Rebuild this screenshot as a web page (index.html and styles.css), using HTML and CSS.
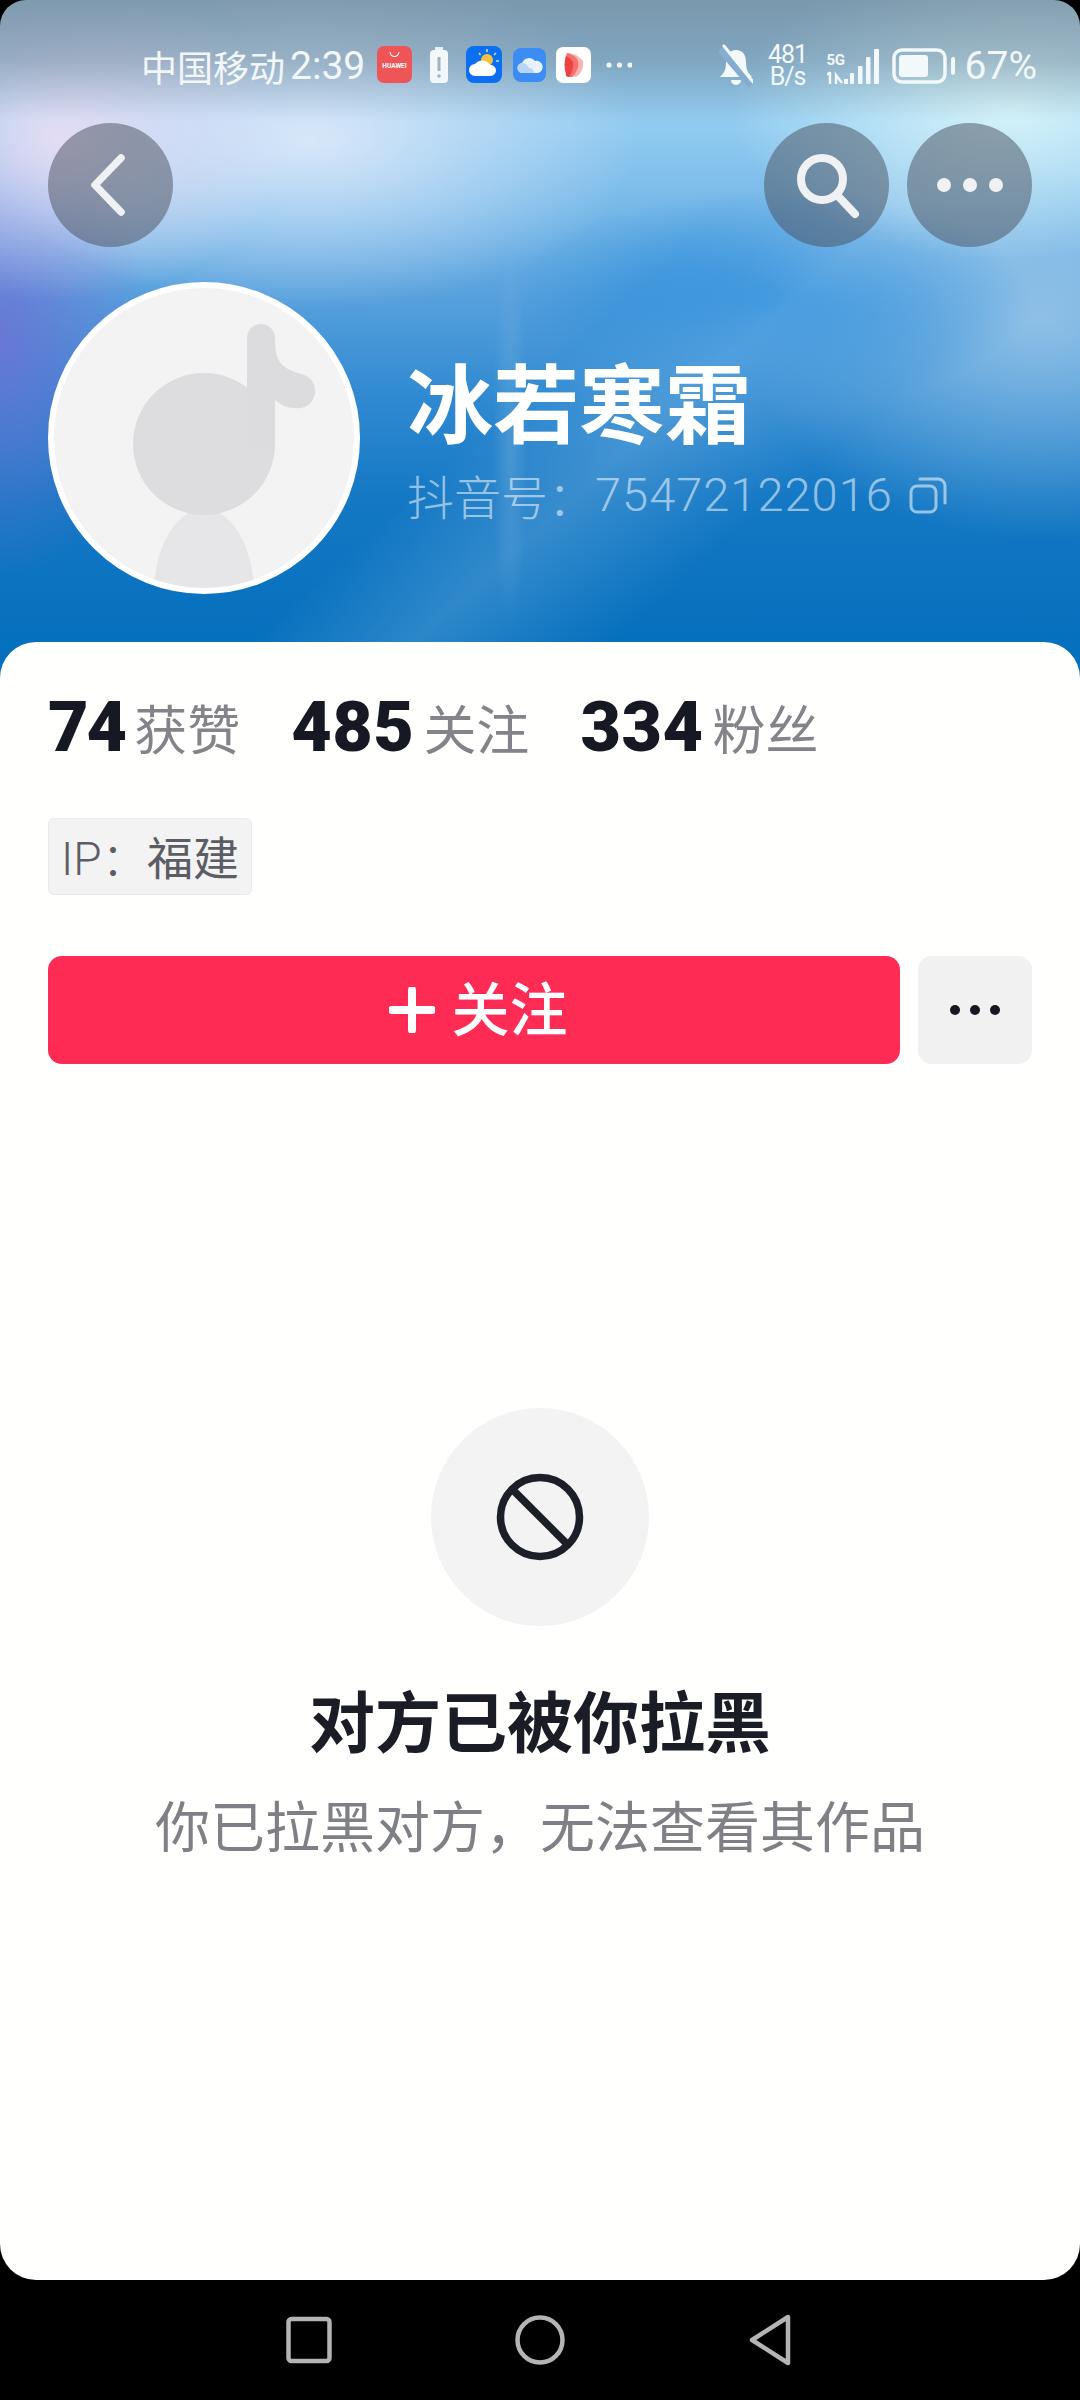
FILE: index.html
```html
<!DOCTYPE html>
<html lang="zh">
<head>
<meta charset="utf-8">
<title>冰若寒霜</title>
<link rel="stylesheet" href="styles.css">
</head>
<body>
<div class="app">
  <header class="hero">
    <div class="status">
      <div class="status-left">
        <span class="carrier">中国移动</span><span class="clock">2:39</span>
        <svg class="notif" width="255" height="44" viewBox="0 0 255 44">
          <rect x="0" y="2" width="35" height="37" rx="7" fill="#ee5557"/>
          <path d="M13 8c1 6 8 6 9 0" fill="none" stroke="#fff" stroke-width="1.2"/>
          <text x="17.5" y="24" class="hw">HUAWEI</text>
          <path d="M58 3h8v3h-8z" fill="#fff" opacity=".8"/>
          <rect x="53" y="6" width="18" height="33" rx="4" fill="#f4f7fa"/>
          <path d="M62 13v14" stroke="#9fb4c2" stroke-width="3"/><circle cx="62" cy="32" r="1.8" fill="#9fb4c2"/>
          <rect x="89" y="2" width="36" height="37" rx="8" fill="#0a6ff0"/>
          <circle cx="110" cy="16" r="6" fill="#f4c23c"/>
          <path d="M110 5v3M119 9l-2 2M122 17h-3M102 9l1.500 2" stroke="#cfe6a8" stroke-width="1.500"/>
          <path d="M98 32a6 6 0 0 1 0-12 9 9 0 0 1 15 1 5.500 5.500 0 0 1 1 11z" fill="#fff"/>
          <rect x="136" y="4" width="33" height="34" rx="8" fill="#3b8df3"/>
          <path d="M146 29a5 5 0 0 1-1-10 7.500 7.500 0 0 1 13-2 6 6 0 0 1 3 12z" fill="#e8f2fd"/>
          <path d="M146 29a5 5 0 0 1-1-10c3 0 6 2 7 5 3 0 5 2 5 5z" fill="#b9d6f7"/>
          <rect x="179" y="3" width="35" height="36" rx="7" fill="#fff"/>
          <path d="M190 9c5 0 11 2 16 8 1 7-2 13-7 16-6-1-9 0-8-4-2-6-3-14-1-20z" fill="#f9b5b2"/>
          <path d="M190 9c4 1 9 3 11 8 1 6-1 11-6 16-3 0-4 0-5-1-2-7-3-16 0-23z" fill="#f7716f"/>
          <path d="M189 12c3 1 5 3 7 6 1 5-1 10-4 15-3-1-4-1-3-3-2-6-2-12 0-18z" fill="#ec4244"/>
          <g fill="#fff" opacity=".9"><circle cx="232" cy="21" r="2.600"/><circle cx="242.500" cy="21" r="2.600"/><circle cx="253" cy="21" r="2.600"/></g>
        </svg>
      </div>
      <div class="status-right">
        <svg class="bell" width="34" height="44" viewBox="0 0 34 44">
          <path d="M17 6c-7 0-10 5-10 12 0 8-2 11-6 15h32c-4-4-6-7-6-15 0-7-3-12-10-12z" fill="#f3f8fb"/>
          <path d="M12 36h10a5 5 0 0 1-10 0z" fill="#f3f8fb"/>
          <path d="M1 5l31 36" stroke="#84add0" stroke-width="7"/>
          <path d="M5 2l29 36" stroke="#f3f8fb" stroke-width="3" stroke-linecap="round"/>
        </svg>
        <div class="net"><span>481</span><span>B/s</span></div>
        <div class="sig">
          <div class="sig-type">
            <span class="g5">5G</span>
            <svg width="21" height="14" viewBox="0 0 21 14"><path d="M3 13V1M0 4l3-3M9 13V4l6 8" fill="none" stroke="#f3f8fb" stroke-width="2.400"/><rect x="17" y="8" width="4" height="5" fill="#f3f8fb"/></svg>
          </div>
          <svg width="29" height="36" viewBox="0 0 29 36"><g fill="#f3f8fb"><rect x="0" y="24" width="4" height="11" rx="1"/><rect x="8" y="17" width="4.500" height="18" rx="1"/><rect x="16" y="8" width="4.500" height="27" rx="1"/><rect x="24" y="0" width="5" height="35" rx="1"/></g></svg>
        </div>
        <svg class="batt" width="63" height="36" viewBox="0 0 63 36">
          <rect x="2" y="2" width="51" height="32" rx="8" fill="none" stroke="#f3f8fb" stroke-width="3.500"/>
          <rect x="7" y="7" width="29" height="22" rx="3" fill="#f3f8fb"/>
          <rect x="59" y="9" width="4" height="18" rx="2" fill="#f3f8fb"/>
        </svg>
        <span class="pct">67%</span>
      </div>
    </div>

    <nav class="top-actions">
      <button class="round">
        <svg class="chev" width="44" height="66" viewBox="0 0 44 66"><path d="M35 6L9 33l26 27" fill="none" stroke="#f0f1f3" stroke-width="7.500" stroke-linecap="round" stroke-linejoin="round"/></svg>
      </button>
      <div class="top-right">
        <button class="round">
          <svg width="68" height="68" viewBox="0 0 68 68"><circle cx="29" cy="28" r="21" fill="none" stroke="#f0f1f3" stroke-width="8"/><path d="M44 44l18 19" stroke="#f0f1f3" stroke-width="8" stroke-linecap="round"/></svg>
        </button>
        <button class="round">
          <svg width="68" height="16" viewBox="0 0 68 16"><g fill="#f0f1f3"><circle cx="8" cy="8" r="7"/><circle cx="34" cy="8" r="7"/><circle cx="60" cy="8" r="7"/></g></svg>
        </button>
      </div>
    </nav>

    <section class="profile">
      <div class="avatar">
        <svg width="300" height="300" viewBox="0 0 300 300">
          <ellipse cx="150" cy="305" rx="50" ry="84" fill="#e6e6e8"/>
          <circle cx="150" cy="156" r="71" fill="#dddddf"/>
          <path d="M193 50a14 14 0 0 1 28 0c0 24 6 30 26 36a17 17 0 0 1-6 34c-8 0-14-3-20-8v46h-28z" fill="#dcdcde"/>
        </svg>
      </div>
      <div class="identity">
        <h1 class="name">冰若寒霜</h1>
        <div class="uid">
          <span class="uid-label">抖音号：</span><span class="uid-num">75472122016</span>
          <svg class="copy" width="38" height="38" viewBox="0 0 38 38"><rect x="2" y="10" width="25" height="26" rx="6" fill="none" stroke="currentColor" stroke-width="3"/><path d="M11 3h18a7 7 0 0 1 7 7v17" fill="none" stroke="currentColor" stroke-width="3" stroke-linecap="round"/></svg>
        </div>
      </div>
    </section>
  </header>

  <main class="card">
    <div class="stats">
      <div class="stat stat-tight"><b>74</b><span>获赞</span></div>
      <div class="stat"><b>485</b><span>关注</span></div>
      <div class="stat"><b>334</b><span>粉丝</span></div>
    </div>
    <div class="tag"><span class="tag-ip">IP：</span><span>福建</span></div>
    <div class="actions">
      <button class="follow">
        <svg width="46" height="46" viewBox="0 0 46 46"><path d="M23 3v40M3 23h40" stroke="#fff" stroke-width="8" stroke-linecap="round"/></svg>
        <span class="follow-label">关注</span>
      </button>
      <button class="more">
        <svg width="52" height="12" viewBox="0 0 52 12"><g fill="#16181f"><circle cx="6" cy="6" r="5"/><circle cx="26" cy="6" r="5"/><circle cx="46" cy="6" r="5"/></g></svg>
      </button>
    </div>
    <section class="blocked">
      <div class="blocked-icon">
        <svg width="88" height="88" viewBox="0 0 88 88"><circle cx="44" cy="44" r="39.500" fill="none" stroke="#1c1e28" stroke-width="7.500"/><path d="M16 16l56 56" stroke="#1c1e28" stroke-width="7.500"/></svg>
      </div>
      <h2 class="blocked-title">对方已被你拉黑</h2>
      <p class="blocked-text">你已拉黑对方，无法查看其作品</p>
    </section>
  </main>

  <footer class="navbar">
    <svg width="46" height="48" viewBox="0 0 46 48"><rect x="2.500" y="3" width="41" height="42" rx="3" fill="none" stroke="#b4b4b4" stroke-width="4.500"/></svg>
    <svg width="50" height="50" viewBox="0 0 50 50"><circle cx="25" cy="25" r="22.500" fill="none" stroke="#b4b4b4" stroke-width="4.500"/></svg>
    <svg width="44" height="54" viewBox="0 0 44 54"><path d="M40 4L4 27l36 23z" fill="none" stroke="#b4b4b4" stroke-width="4.500" stroke-linejoin="round"/></svg>
  </footer>
</div>
</body>
</html>
```
FILE: styles.css
```css
* { box-sizing: border-box; }
html, body { margin: 0; padding: 0; background: #000; }
body { width: 1080px; height: 2400px; overflow: hidden; font-family: "Noto Sans CJK SC", "Roboto", sans-serif; }
h1, h2, p { margin: 0; font-weight: inherit; }
button { border: 0; padding: 0; margin: 0; font: inherit; display: flex; align-items: center; justify-content: center; }

.app {
  width: 1080px;
  height: 2400px;
  display: flex;
  flex-direction: column;
  border-radius: 26px 26px 0 0;
  overflow: hidden;
  background-color: #000;
  background-image:
    linear-gradient(180deg, rgba(75,85,95,.42) 0, rgba(75,85,95,.3) 60px, rgba(75,85,95,0) 120px),
    radial-gradient(18px 190px at 510px 440px, rgba(255,255,255,.14) 0, rgba(255,255,255,0) 100%),
    linear-gradient(138deg, rgba(255,255,255,0) 52%, rgba(200,225,245,.2) 61%, rgba(255,255,255,0) 72%),
    radial-gradient(230px 160px at 60px 140px, rgba(232,222,244,.95) 0, rgba(228,220,242,0) 100%),
    radial-gradient(330px 170px at 310px 140px, rgba(224,234,250,.9) 0, rgba(220,232,248,0) 100%),
    radial-gradient(280px 150px at 1010px 110px, rgba(218,248,251,.95) 0, rgba(218,248,251,0) 100%),
    radial-gradient(150px 240px at 0 340px, rgba(112,112,212,.8) 0, rgba(112,112,212,0) 100%),
    radial-gradient(260px 110px at 770px 300px, rgba(30,135,218,.85) 0, rgba(24,130,216,0) 100%),
    radial-gradient(300px 220px at 1040px 320px, rgba(165,205,235,.75) 0, rgba(170,210,235,0) 100%),
    linear-gradient(180deg, #9cc8e6 0, #90caf0 130px, #76b8e8 210px, #559fdc 300px, #2f89d1 400px, #1478c4 500px, #0570be 640px);
  background-size: 1080px 690px;
  background-repeat: no-repeat;
}

/* Hero */
.hero { height: 642px; flex: none; }
.status { height: 44px; margin-top: 44px; padding: 0 43px 0 141px; display: flex; justify-content: space-between; align-items: center; color: #f3f7fa; }
.status-left, .status-right { display: flex; align-items: center; }
.carrier { font-size: 36px; line-height: 44px; }
.clock { font-family: "Roboto", sans-serif; font-size: 39px; line-height: 44px; margin-left: 5px; }
.notif { margin-left: 12px; }
.hw { font: 700 6.500px "Roboto", sans-serif; fill: #fff; text-anchor: middle; }
.bell { display: block; }
.net { width: 40px; margin-left: 15px; display: flex; flex-direction: column; align-items: center; font-family: "Roboto", sans-serif; font-size: 25px; line-height: 22px; letter-spacing: -1px; color: #f3f8fb; }
.sig { margin-left: 19px; display: flex; align-items: flex-end; gap: 2px; height: 38px; }
.sig-type { width: 21px; display: flex; flex-direction: column; align-items: flex-start; gap: 4px; }
.sig-type svg { display: block; }
.g5 { font-family: "Roboto", sans-serif; font-size: 15px; line-height: 14px; font-weight: 700; letter-spacing: -.5px; color: #f3f8fb; }
.batt { display: block; margin-left: 13px; }
.pct { font-family: "Roboto", sans-serif; font-size: 39px; line-height: 44px; margin-left: 10px; }

.top-actions { margin-top: 35px; padding: 0 48px; display: flex; justify-content: space-between; }
.top-right { display: flex; gap: 18px; }
.round { width: 125px; height: 124px; border-radius: 50%; background: rgba(72,78,92,.5); }
.chev { margin-right: 6px; }

.profile { margin-top: 35px; padding-left: 48px; display: flex; align-items: center; }
.avatar { width: 312px; height: 312px; border-radius: 50%; border: 6px solid #fff; background: #f3f3f4; overflow: hidden; flex: none; }
.avatar svg { display: block; }
.identity { margin-left: 47px; }
.name { font-size: 86px; line-height: 100px; font-weight: 700; color: #fff; }
.uid { margin-top: 13px; display: flex; align-items: center; color: rgba(255,255,255,.55); font-size: 47px; line-height: 64px; font-weight: 300; }
.uid-num { font-family: "Roboto", sans-serif; font-weight: 300; letter-spacing: 1px; }
.copy { margin-left: 16px; }

/* Card */
.card { flex: none; height: 1638px; background: #fffffd; border-radius: 36px; padding: 0 48px; display: flex; flex-direction: column; }
.stats { margin-top: 50px; height: 70px; display: flex; gap: 51px; }
.stat { display: flex; align-items: center; gap: 9px; }
.stat b { font-family: "Roboto", sans-serif; font-size: 70px; font-weight: 900; line-height: 70px; color: #161823; letter-spacing: .5px; }
.stat-tight b { letter-spacing: -2px; }
.stat span { font-size: 53px; line-height: 70px; color: #83838a; font-weight: 400; }
.tag { margin-top: 56px; width: 204px; height: 77px; padding: 0 0 4px 12px; display: flex; align-items: center; background: #f3f3f3; border: 1px solid #e9e9ea; border-radius: 6px; font-size: 46px; color: #5c5d64; }
.tag-ip { font-family: "Roboto", "Noto Sans CJK SC", sans-serif; font-weight: 300; width: 86px; }
.actions { margin-top: 61px; display: flex; gap: 18px; }
.follow { width: 852px; height: 108px; gap: 16px; padding-left: 9px; background: #fe2c55; border-radius: 14px; color: #fff; font-size: 58px; font-weight: 500; }
.follow-label { line-height: 64px; padding-bottom: 8px; }
.more { width: 114px; height: 108px; background: #f1f1f2; border-radius: 14px; }

.blocked { margin-top: 344px; display: flex; flex-direction: column; align-items: center; }
.blocked-icon { width: 218px; height: 218px; border-radius: 50%; background: #f3f3f3; display: flex; align-items: center; justify-content: center; }
.blocked-title { margin-top: 44px; font-size: 66px; line-height: 96px; font-weight: 700; color: #1a1c26; }
.blocked-text { margin-top: 19px; font-size: 55px; line-height: 76px; color: #7f8086; font-weight: 400; }

/* Android nav */
.navbar { flex: 1; padding: 0 0 0 286px; display: flex; align-items: center; gap: 183px; }
.navbar svg { display: block; flex: none; }
```
